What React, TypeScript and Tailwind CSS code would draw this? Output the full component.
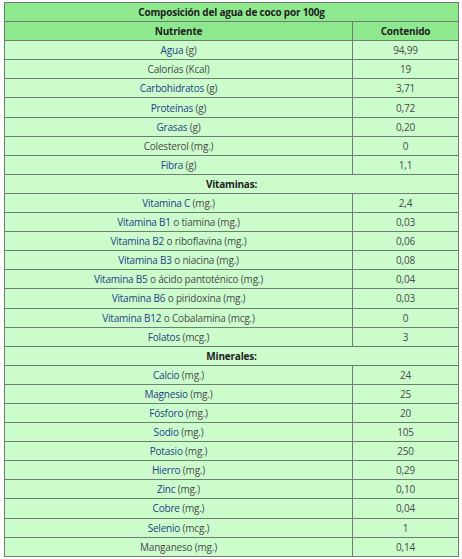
type Cell = { link: string; rest: string; value: string };

const nutrientes: Cell[] = [
  { link: "Agua", rest: " (g)", value: "94,99" },
  { link: "", rest: "Calorías (Kcal)", value: "19" },
  { link: "Carbohidratos", rest: " (g)", value: "3,71" },
  { link: "Proteínas", rest: " (g)", value: "0,72" },
  { link: "Grasas", rest: " (g)", value: "0,20" },
  { link: "", rest: "Colesterol (mg.)", value: "0" },
  { link: "Fibra", rest: " (g)", value: "1,1" },
];

const vitaminas: Cell[] = [
  { link: "Vitamina C", rest: " (mg.)", value: "2,4" },
  { link: "Vitamina B1", rest: " o tiamina (mg.)", value: "0,03" },
  { link: "Vitamina B2", rest: " o riboflavina (mg.)", value: "0,06" },
  { link: "Vitamina B3", rest: " o niacina (mg.)", value: "0,08" },
  { link: "Vitamina B5", rest: " o ácido pantoténico (mg.)", value: "0,04" },
  { link: "Vitamina B6", rest: " o piridoxina (mg.)", value: "0,03" },
  { link: "Vitamina B12", rest: " o Cobalamina (mcg.)", value: "0" },
  { link: "Folatos", rest: " (mcg.)", value: "3" },
];

const minerales: Cell[] = [
  { link: "Calcio", rest: " (mg.)", value: "24" },
  { link: "Magnesio", rest: " (mg.)", value: "25" },
  { link: "Fósforo", rest: " (mg.)", value: "20" },
  { link: "Sodio", rest: " (mg.)", value: "105" },
  { link: "Potasio", rest: " (mg.)", value: "250" },
  { link: "Hierro", rest: " (mg.)", value: "0,29" },
  { link: "Zinc", rest: " (mg.)", value: "0,10" },
  { link: "Cobre", rest: " (mg.)", value: "0,04" },
  { link: "Selenio", rest: " (mcg.)", value: "1" },
  { link: "", rest: "Manganeso (mg.)", value: "0,14" },
];

const td = "h-[19.1px] border border-[#6f7f6f] p-0 text-center align-middle leading-[18px]";

function Row({ c }: { c: Cell }) {
  return (
    <tr className="bg-[#ccfccc]">
      <td className={td}>
        {c.link && <span className="text-[#1f3f86]">{c.link}</span>}
        {c.rest}
      </td>
      <td className={td}>{c.value}</td>
    </tr>
  );
}

function Section({ title }: { title: string }) {
  return (
    <tr className="bg-[#ccfccc]">
      <td colSpan={2} className={`${td} font-bold text-[#222]`}>
        {title}
      </td>
    </tr>
  );
}

export default function App() {
  return (
    <div className="bg-white pl-[4px] pt-[2px] font-['Open_Sans',sans-serif] text-[10px] tracking-[-0.2px] text-[#4a4a4a]">
      <table className="w-[455px] table-fixed border-collapse border border-[#a9a9a9]">
        <colgroup>
          <col className="w-[348px]" />
          <col />
        </colgroup>
        <tbody>
          <tr className="bg-[#8ee88e]">
            <td colSpan={2} className={`${td} font-bold text-[#222]`}>
              Composición del agua de coco por 100g
            </td>
          </tr>
          <tr className="bg-[#8ee88e]">
            <td className={`${td} font-bold text-[#222]`}>Nutriente</td>
            <td className={`${td} font-bold text-[#222]`}>Contenido</td>
          </tr>
          {nutrientes.map((c) => (
            <Row key={c.link + c.rest} c={c} />
          ))}
          <Section title="Vitaminas:" />
          {vitaminas.map((c) => (
            <Row key={c.link + c.rest} c={c} />
          ))}
          <Section title="Minerales:" />
          {minerales.map((c) => (
            <Row key={c.link + c.rest} c={c} />
          ))}
        </tbody>
      </table>
    </div>
  );
}
